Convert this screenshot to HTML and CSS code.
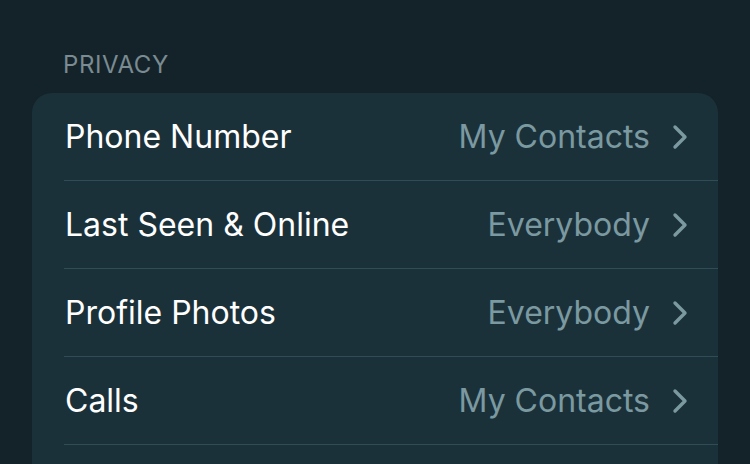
FILE: index.html
```html
<!DOCTYPE html>
<html>
<head>
<meta charset="utf-8">
<link rel="stylesheet" href="styles.css">
</head>
<body>
<div class="section">
  <div class="section-title">PRIVACY</div>
  <div class="card">
    <div class="row">
      <span class="label">Phone Number</span>
      <span class="value">My Contacts</span>
      <svg class="chev" viewBox="0 0 16 26"><path d="M3 3 L13 13 L3 23" /></svg>
    </div>
    <div class="row">
      <span class="label">Last Seen &amp; Online</span>
      <span class="value">Everybody</span>
      <svg class="chev" viewBox="0 0 16 26"><path d="M3 3 L13 13 L3 23" /></svg>
    </div>
    <div class="row">
      <span class="label">Profile Photos</span>
      <span class="value">Everybody</span>
      <svg class="chev" viewBox="0 0 16 26"><path d="M3 3 L13 13 L3 23" /></svg>
    </div>
    <div class="row">
      <span class="label">Calls</span>
      <span class="value">My Contacts</span>
      <svg class="chev" viewBox="0 0 16 26"><path d="M3 3 L13 13 L3 23" /></svg>
    </div>
    <div class="card-rest"></div>
  </div>
</div>
</body>
</html>
```

FILE: styles.css
```css
html, body {
  margin: 0;
  padding: 0;
  background: #14232a;
  height: 464px;
  overflow: hidden;
}
body {
  font-family: Inter, "Open Sans", "Liberation Sans", sans-serif;
}
.section {
  padding: 0 32px 0 32px;
}
.section-title {
  color: #7a8b91;
  font-size: 24px;
  letter-spacing: 0.6px;
  padding: 50px 0 13px 31px;
  line-height: 30px;
}
.card {
  background: #1b313a;
  border-radius: 20px;
  overflow: hidden;
}
.row {
  display: flex;
  align-items: center;
  height: 88px;
  box-sizing: border-box;
  margin-left: 32px;
  padding: 0 30px 0 1px;
  border-bottom: 1px solid #304d57;
}
.card-rest {
  height: 40px;
}
.label {
  flex: 1;
  color: #ffffff;
  font-size: 32px;
}
.value {
  color: #7b99a0;
  font-size: 32px;
  margin-right: 22px;
}
.chev {
  width: 16px;
  height: 26px;
  fill: none;
  stroke: #7b99a0;
  stroke-width: 3.4;
  stroke-linecap: round;
  stroke-linejoin: round;
}
```
